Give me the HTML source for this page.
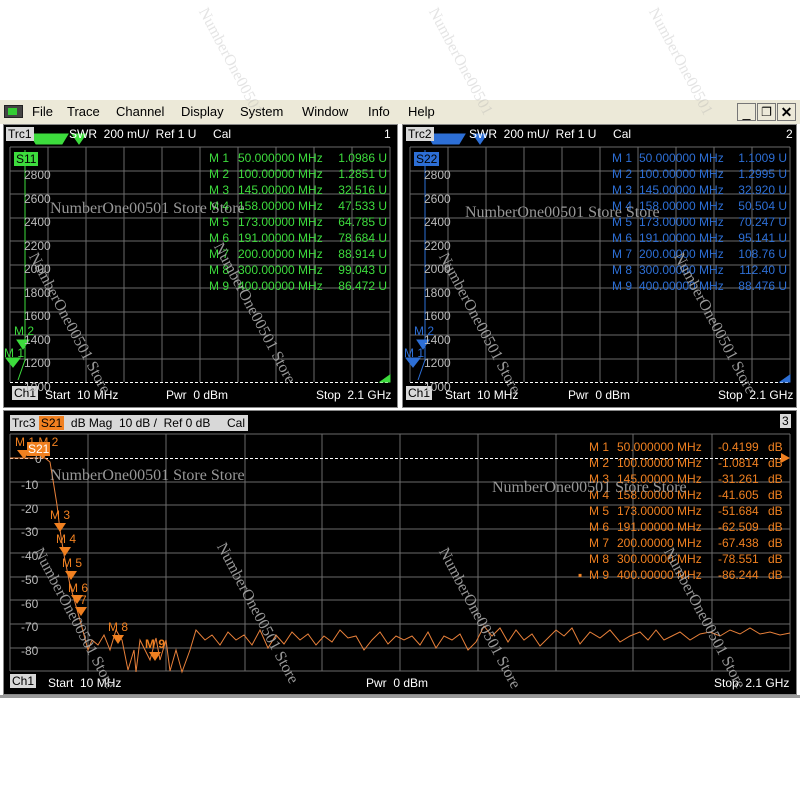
<!DOCTYPE html>
<html><head><meta charset="utf-8"><style>
*{margin:0;padding:0;box-sizing:border-box}
body{width:800px;height:800px;background:#fff;position:relative;overflow:hidden;font-family:"Liberation Sans",sans-serif}
.a{position:absolute;white-space:nowrap}
.menu{left:0;top:100px;width:800px;height:24px;background:#ece9d8;font-size:13px;color:#000}
.menu span{position:absolute;top:4px}
.pn{background:#000;border:1px solid #888}
.t{font-size:12px;color:#fff}
.lb{background:#d8d8d8;color:#000;padding:0 2px}
.wm{font-family:"Liberation Serif",serif;color:#a8a8a8;font-size:16px;opacity:.9}
.btn{top:103px;width:19px;height:18px;border:1px solid #777;background:#ece9d8;font-size:14px;text-align:center;line-height:16px}
.col{line-height:16px}
.r{text-align:right}
</style></head><body>

<div class="a menu">
 <div class="a" style="left:4px;top:5px;width:19px;height:13px;background:#444;border:1px solid #222"><div class="a" style="left:3px;top:2px;width:9px;height:7px;background:#3c3"></div></div>
 <span style="left:32px">File</span><span style="left:67px">Trace</span><span style="left:116px">Channel</span><span style="left:181px">Display</span><span style="left:240px">System</span><span style="left:302px">Window</span><span style="left:368px">Info</span><span style="left:408px">Help</span>
</div>
<div class="a btn" style="left:737px">_</div>
<div class="a btn" style="left:757px;font-size:12px">&#x2750;</div>
<div class="a btn" style="left:777px;font-weight:bold">✕</div>

<div class="a pn" style="left:3px;top:124px;width:395px;height:284px"></div>
<div class="a pn" style="left:402px;top:124px;width:395px;height:284px"></div>
<div class="a pn" style="left:3px;top:410px;width:794px;height:285px"></div>
<div class="a" style="left:0;top:695px;width:800px;height:3px;background:#999"></div>

<svg class="a" style="left:0;top:0" width="800" height="800" xmlns="http://www.w3.org/2000/svg">
 <g stroke="#6a6a6a" stroke-width="1" fill="none">
  <path d="M10 147H390M10 171H390M10 194H390M10 218H390M10 241H390M10 265H390M10 288H390M10 312H390M10 335H390M10 359H390M10 147V382M48 147V382M86 147V382M124 147V382M162 147V382M200 147V382M238 147V382M276 147V382M314 147V382M352 147V382M390 147V382"/>
  <path d="M410 147H790M410 171H790M410 194H790M410 218H790M410 241H790M410 265H790M410 288H790M410 312H790M410 335H790M410 359H790M410 147V382M448 147V382M486 147V382M524 147V382M562 147V382M600 147V382M638 147V382M676 147V382M714 147V382M752 147V382M790 147V382"/>
  <path d="M10 434H790M10 482H790M10 505H790M10 529H790M10 553H790M10 577H790M10 600H790M10 624H790M10 648H790M10 671H790M10 434V671M88 434V671M166 434V671M245 434V671M322 434V671M400 434V671M478 434V671M556 434V671M633 434V671M712 434V671M790 434V671"/>
 </g>
 <g stroke="#fff" stroke-dasharray="3,2" stroke-width="1">
  <path d="M10 382.5H390M410 382.5H790M10 458.5H790"/>
 </g>
 <g fill="#3ddc3d" stroke="#3ddc3d">
  <path d="M25 150V360L18 380" fill="none"/>
  <path d="M17 340h12l-6 9z"/><path d="M6 358h14l-7 9z"/>
  <path d="M30 134h38l-6 10h-26z"/><path d="M72 134h14l-7 10z"/>
  <path d="M380 382l10-7v7z"/>
 </g>
 <g fill="#2d6fd6" stroke="#2d6fd6">
  <path d="M425 150V360L418 380" fill="none"/>
  <path d="M417 340h12l-6 9z"/><path d="M406 358h14l-7 9z"/>
  <path d="M427 134h38l-6 10h-26z"/><path d="M473 134h14l-7 10z"/>
  <path d="M780 382l10-7v7z"/>
 </g>
 <polyline fill="none" stroke="#e8803a" stroke-width="1" points="10,458 45,458 50,462 53,480 57,505 60,530 64,555 70,585 80,620 88,650 92,640 98,645 104,635 110,650 116,630 122,640 128,670 134,650 136,672 140,640 146,652 150,660 156,638 160,660 166,640 170,671 176,650 182,672 190,650 196,630 205,640 212,635 220,645 228,632 236,640 244,635 252,645 260,630 268,648 276,635 284,644 292,632 300,640 308,634 316,645 324,636 332,642 340,630 348,638 356,636 364,650 372,640 380,632 388,644 396,636 404,640 412,636 420,645 428,632 436,648 444,636 452,640 460,634 468,650 476,642 484,626 492,636 500,628 508,642 516,630 524,640 532,634 540,646 548,638 556,630 564,636 572,628 580,644 590,632 600,638 610,630 620,642 630,636 640,632 648,640 656,630 664,640 672,636 680,632 690,640 700,634 710,632 720,636 730,630 740,634 750,628 760,634 770,632 780,635 790,633"/>
 <g fill="#f08020">
  <path d="M17 450h14l-7 9z"/><path d="M36 450h14l-7 9z"/>
  <path d="M54 523h12l-6 9z"/><path d="M59 547h12l-6 9z"/><path d="M65 571h12l-6 9z"/>
  <path d="M71 595h12l-6 9z"/><path d="M75 607h12l-6 9z"/>
  <path d="M112 635h12l-6 9z"/><path d="M149 652h12l-6 9z"/>
  <path d="M790 458l-9-5v10z" />
 </g>
</svg>

<!-- panel 1 text -->
<div class="a t" style="left:6px;top:127px"><span class="lb">Trc1</span></div>
<div class="a t" style="left:69px;top:127px">SWR&nbsp; 200 mU/&nbsp; Ref 1 U&nbsp;&nbsp;&nbsp;&nbsp;&nbsp;Cal</div>
<div class="a t" style="left:384px;top:127px">1</div>
<div class="a t" style="left:14px;top:152px;background:#3ddc3d;color:#000;padding:0 2px">S11</div>
<div class="a t" style="left:12px;top:386px"><span class="lb">Ch1</span></div>
<div class="a t" style="left:45px;top:388px">Start&nbsp; 10 MHz</div>
<div class="a t" style="left:166px;top:388px">Pwr&nbsp; 0 dBm</div>
<div class="a t" style="left:316px;top:388px">Stop&nbsp; 2.1 GHz</div>
<div class="a t" style="left:24px;top:164px;color:#bbb;line-height:23.5px">2800<br>2600<br>2400<br>2200<br>2000<br>1800<br>1600<br>1400<br>1200<br>1000</div>
<div class="a t" style="left:14px;top:324px;color:#3ddc3d">M 2</div>
<div class="a t" style="left:4px;top:346px;color:#3ddc3d">M 1</div>
<div class="a t col" style="left:209px;top:150px;color:#3ddc3d">M 1<br>M 2<br>M 3<br>M 4<br>M 5<br>M 6<br>M 7<br>M 8<br>M 9</div>
<div class="a t col" style="left:238px;top:150px;color:#3ddc3d">50.000000 MHz<br>100.00000 MHz<br>145.00000 MHz<br>158.00000 MHz<br>173.00000 MHz<br>191.00000 MHz<br>200.00000 MHz<br>300.00000 MHz<br>400.00000 MHz</div>
<div class="a t col r" style="left:330px;width:57px;top:150px;color:#3ddc3d">1.0986 U<br>1.2851 U<br>32.516 U<br>47.533 U<br>64.785 U<br>78.684 U<br>88.914 U<br>99.043 U<br>86.472 U</div>

<!-- panel 2 text -->
<div class="a t" style="left:406px;top:127px"><span class="lb">Trc2</span></div>
<div class="a t" style="left:469px;top:127px">SWR&nbsp; 200 mU/&nbsp; Ref 1 U&nbsp;&nbsp;&nbsp;&nbsp;&nbsp;Cal</div>
<div class="a t" style="left:786px;top:127px">2</div>
<div class="a t" style="left:414px;top:152px;background:#2d6fd6;color:#000;padding:0 2px">S22</div>
<div class="a t" style="left:406px;top:386px"><span class="lb">Ch1</span></div>
<div class="a t" style="left:445px;top:388px">Start&nbsp; 10 MHz</div>
<div class="a t" style="left:568px;top:388px">Pwr&nbsp; 0 dBm</div>
<div class="a t" style="left:718px;top:388px">Stop&nbsp; 2.1 GHz</div>
<div class="a t" style="left:424px;top:164px;color:#bbb;line-height:23.5px">2800<br>2600<br>2400<br>2200<br>2000<br>1800<br>1600<br>1400<br>1200<br>1000</div>
<div class="a t" style="left:414px;top:324px;color:#2d6fd6">M 2</div>
<div class="a t" style="left:404px;top:346px;color:#2d6fd6">M 1</div>
<div class="a t col" style="left:612px;top:150px;color:#2d6fd6">M 1<br>M 2<br>M 3<br>M 4<br>M 5<br>M 6<br>M 7<br>M 8<br>M 9</div>
<div class="a t col" style="left:639px;top:150px;color:#2d6fd6">50.000000 MHz<br>100.00000 MHz<br>145.00000 MHz<br>158.00000 MHz<br>173.00000 MHz<br>191.00000 MHz<br>200.00000 MHz<br>300.00000 MHz<br>400.00000 MHz</div>
<div class="a t col r" style="left:730px;width:57px;top:150px;color:#2d6fd6">1.1009 U<br>1.2995 U<br>32.920 U<br>50.504 U<br>70.247 U<br>95.141 U<br>108.76 U<br>112.40 U<br>88.476 U</div>

<!-- panel 3 text -->
<div class="a t" style="left:10px;top:415px;background:#d8d8d8;color:#000;padding:1px 2px;width:238px">Trc3 <span style="background:#f08020;padding:0 2px">S21</span>&nbsp; dB Mag&nbsp; 10 dB /&nbsp; Ref 0 dB&nbsp;&nbsp;&nbsp;&nbsp; Cal</div>
<div class="a t" style="left:780px;top:414px;background:#d8d8d8;color:#000;padding:0 2px">3</div>
<div class="a t" style="left:21px;top:474px;color:#bbb;line-height:23.7px">-10<br>-20<br>-30<br>-40<br>-50<br>-60<br>-70<br>-80</div>
<div class="a t" style="left:35px;top:452px;color:#bbb">0</div>
<div class="a t" style="left:15px;top:435px;color:#f08020">M 1 M 2</div>
<div class="a t" style="left:27px;top:442px;background:#f08020;color:#fff;padding:0 1px">S21</div>
<div class="a t" style="left:50px;top:508px;color:#f08020">M 3</div>
<div class="a t" style="left:56px;top:532px;color:#f08020">M 4</div>
<div class="a t" style="left:62px;top:556px;color:#f08020">M 5</div>
<div class="a t" style="left:68px;top:581px;color:#f08020">M 6</div>
<div class="a t" style="left:80px;top:593px;color:#f08020">7</div>
<div class="a t" style="left:108px;top:620px;color:#f08020">M 8</div>
<div class="a t" style="left:145px;top:637px;color:#f08020;font-weight:bold">M 9</div>
<div class="a t col" style="left:578px;top:567px;color:#f08020">▪</div>
<div class="a t col" style="left:589px;top:439px;color:#f08020">M 1<br>M 2<br>M 3<br>M 4<br>M 5<br>M 6<br>M 7<br>M 8<br>M 9</div>
<div class="a t col" style="left:617px;top:439px;color:#f08020">50.000000 MHz<br>100.00000 MHz<br>145.00000 MHz<br>158.00000 MHz<br>173.00000 MHz<br>191.00000 MHz<br>200.00000 MHz<br>300.00000 MHz<br>400.00000 MHz</div>
<div class="a t col" style="left:718px;top:439px;color:#f08020">-0.4199<br>-1.0814<br>-31.261<br>-41.605<br>-51.684<br>-62.509<br>-67.438<br>-78.551<br>-86.244</div>
<div class="a t col" style="left:768px;top:439px;color:#f08020">dB<br>dB<br>dB<br>dB<br>dB<br>dB<br>dB<br>dB<br>dB</div>
<div class="a t" style="left:10px;top:674px"><span class="lb">Ch1</span></div>
<div class="a t" style="left:48px;top:676px">Start&nbsp; 10 MHz</div>
<div class="a t" style="left:366px;top:676px">Pwr&nbsp; 0 dBm</div>
<div class="a t" style="left:714px;top:676px">Stop&nbsp; 2.1 GHz</div>

<!-- watermarks -->
<div class="a wm" style="left:50px;top:200px">NumberOne00501 Store Store</div>
<div class="a wm" style="left:465px;top:204px">NumberOne00501 Store Store</div>
<div class="a wm" style="left:50px;top:467px">NumberOne00501 Store Store</div>
<div class="a wm" style="left:492px;top:479px">NumberOne00501 Store Store</div>
<div class="a wm" style="transform:rotate(62deg);transform-origin:0 0;left:40px;top:250px">NumberOne00501 Store</div>
<div class="a wm" style="transform:rotate(62deg);transform-origin:0 0;left:225px;top:240px">NumberOne00501 Store</div>
<div class="a wm" style="transform:rotate(62deg);transform-origin:0 0;left:450px;top:250px">NumberOne00501 Store</div>
<div class="a wm" style="transform:rotate(62deg);transform-origin:0 0;left:685px;top:250px">NumberOne00501 Store</div>
<div class="a wm" style="transform:rotate(62deg);transform-origin:0 0;left:45px;top:545px">NumberOne00501 Store</div>
<div class="a wm" style="transform:rotate(62deg);transform-origin:0 0;left:228px;top:540px">NumberOne00501 Store</div>
<div class="a wm" style="transform:rotate(62deg);transform-origin:0 0;left:450px;top:545px">NumberOne00501 Store</div>
<div class="a wm" style="transform:rotate(62deg);transform-origin:0 0;left:675px;top:545px">NumberOne00501 Store</div>
<div class="a wm" style="transform:rotate(62deg);transform-origin:0 0;left:210px;top:5px;opacity:.3">NumberOne00501</div>
<div class="a wm" style="transform:rotate(62deg);transform-origin:0 0;left:440px;top:5px;opacity:.3">NumberOne00501</div>
<div class="a wm" style="transform:rotate(62deg);transform-origin:0 0;left:660px;top:5px;opacity:.3">NumberOne00501</div>
</body></html>
